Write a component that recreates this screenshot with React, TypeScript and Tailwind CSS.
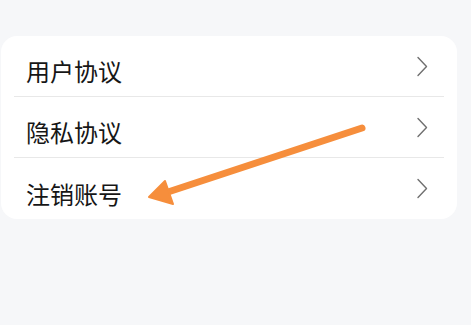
import React from "react";

const items = ["用户协议", "隐私协议", "注销账号"];

function Chevron() {
  return (
    <svg width="12" height="21" viewBox="0 0 12 21" fill="none" className="shrink-0">
      <path d="M2 1.5 L10.5 10.5 L2 19.5" stroke="#707070" strokeWidth="1.4" strokeLinecap="round" strokeLinejoin="round" />
    </svg>
  );
}

export default function App() {
  return (
    <div className="relative h-[325px] w-[471px] overflow-hidden bg-[#f6f7f9] font-['Noto_Sans_CJK_SC','Noto_Sans',sans-serif]">
      <div className="pt-[36px]">
        <div className="ml-[1px] w-[456px] rounded-2xl bg-white px-[13px]">
          {items.map((label, i) => (
            <div
              key={label}
              className={`flex h-[61px] items-center justify-between ${i < items.length - 1 ? "border-b border-[#e8e8e8]" : ""}`}
            >
              <span className="mt-[10px] pl-[12px] text-[24px] leading-[24px] text-[#161616]">{label}</span>
              <div className="mr-[16px]">
                <Chevron />
              </div>
            </div>
          ))}
        </div>
      </div>

      {/* annotation arrow */}
      <svg className="pointer-events-none absolute left-0 top-0" width="471" height="325" viewBox="0 0 471 325">
        <line x1="362" y1="128" x2="168" y2="192" stroke="#f68e3c" strokeWidth="7" strokeLinecap="round" />
        <path d="M149 197 L165 181 L173 204 Z" fill="#f68e3c" stroke="#f68e3c" strokeWidth="2" strokeLinejoin="round" />
      </svg>
    </div>
  );
}
